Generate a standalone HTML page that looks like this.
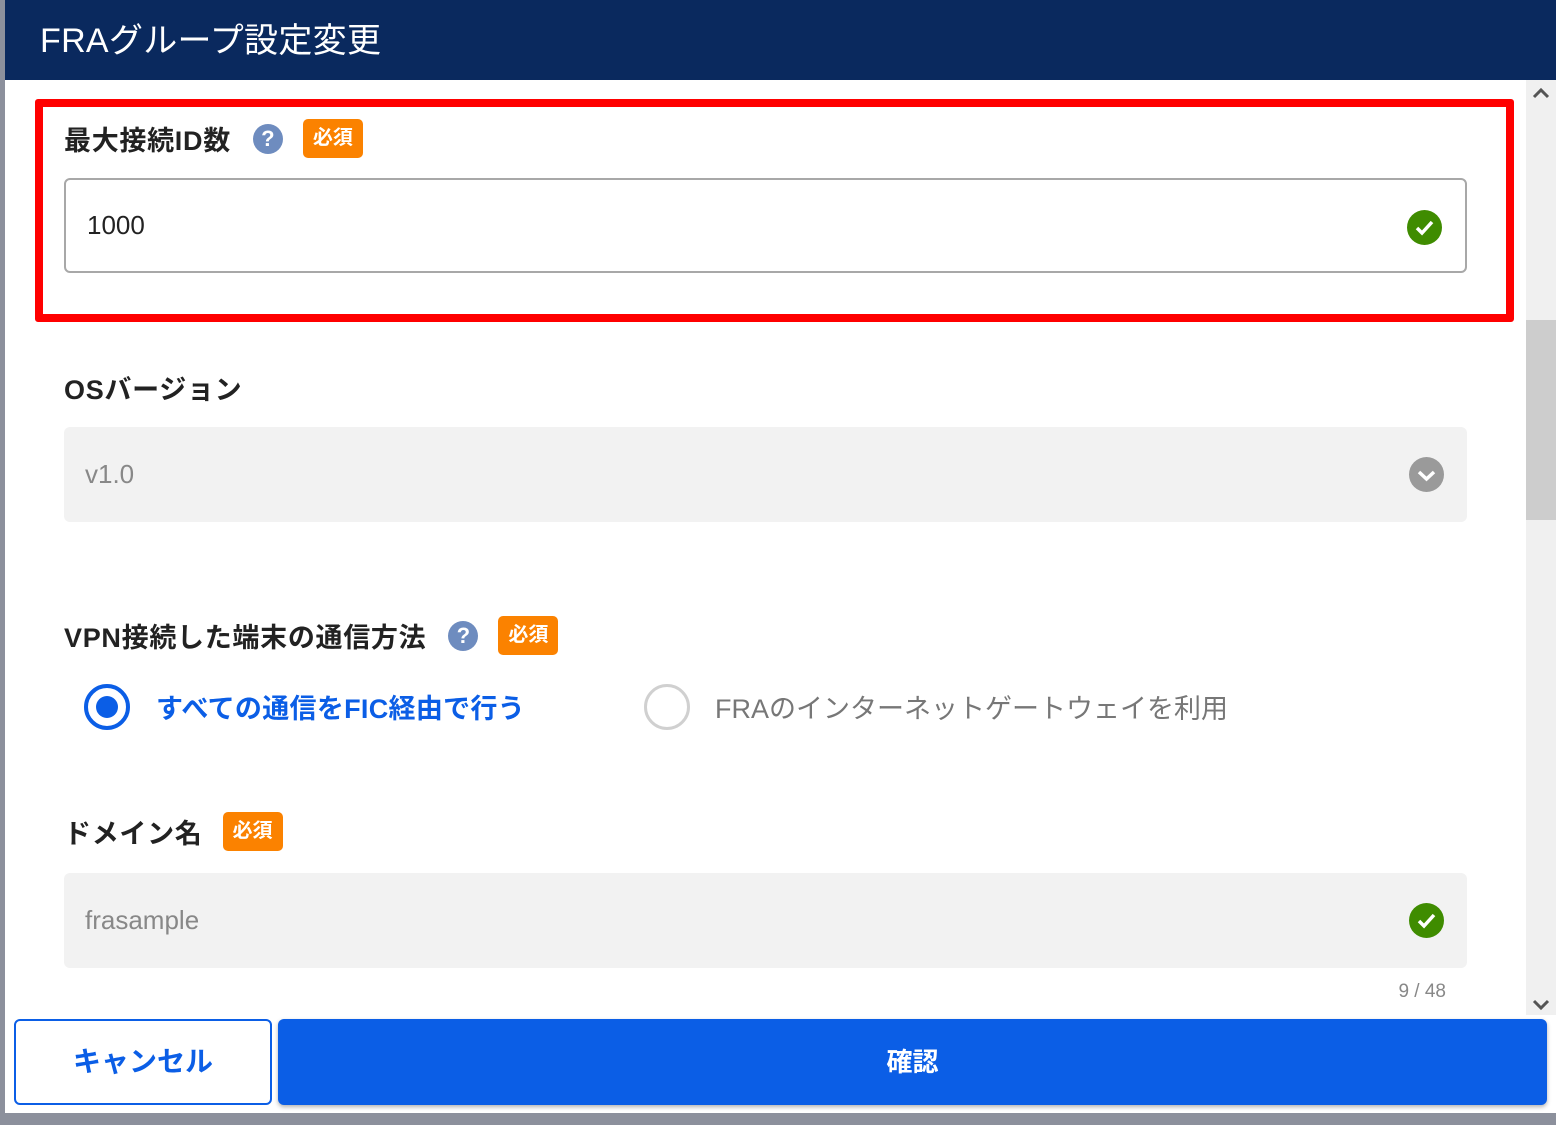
<!DOCTYPE html>
<html><head><meta charset="utf-8"><style>
*{box-sizing:border-box;margin:0;padding:0}
body{width:1556px;height:1125px;background:#8c909c;position:relative;overflow:hidden;font-family:"Liberation Sans","Noto Sans CJK JP",sans-serif}
.modal{position:absolute;left:5px;top:0;width:1551px;height:1113px;background:#fff}
.hdr{position:absolute;left:5px;top:0;width:1551px;height:80px;background:#0a295e;color:#fff;font-size:34px;padding:13px 0 0 35px;letter-spacing:0.3px}
.lbl{position:absolute;font-size:27px;font-weight:bold;color:#222;display:flex;align-items:center;letter-spacing:0.7px}
.q{display:inline-block;width:30px;height:30px;border-radius:50%;background:#6e8cbf;color:#fff;font-size:22px;text-align:center;line-height:30px;font-weight:bold;margin-left:22px;letter-spacing:0}
.req{display:inline-block;background:#fb8200;color:#fff;font-size:20px;font-weight:bold;border-radius:5px;padding:0 10px;height:39px;line-height:39px;margin-left:20px;letter-spacing:0}
.box{position:absolute;left:64px;width:1403px;height:95px;border-radius:6px;font-size:26px;padding-left:21px;display:flex;align-items:center}
.chk{position:absolute;right:23px;top:30px;width:35px;height:35px;border-radius:50%;background:#3f8c00}
</style></head><body>
<div class="modal"></div>
<div class="hdr">FRAグループ設定変更</div>
<div style="position:absolute;left:1526px;top:80px;width:30px;height:935px;background:#f0f0f0"></div>
<div style="position:absolute;left:1526px;top:320px;width:30px;height:200px;background:#cdcdcd"></div>
<svg style="position:absolute;left:1532px;top:86px" width="18" height="14"><path d="M2 11 L9 4 L16 11" stroke="#555" stroke-width="3" fill="none"/></svg>
<svg style="position:absolute;left:1532px;top:998px" width="18" height="14"><path d="M2 3 L9 10 L16 3" stroke="#555" stroke-width="3" fill="none"/></svg>
<div style="position:absolute;left:35px;top:99px;width:1479px;height:223px;border:8px solid #f00;border-radius:3px"></div>
<div class="lbl" style="left:64px;top:119px">最大接続ID数<span class="q">?</span><span class="req">必須</span></div>
<div class="box" style="top:178px;border:2px solid #a8a8a8;color:#222">1000<div class="chk"><svg width="35" height="35"><path d="M10 18 L15 23 L25 12" stroke="#fff" stroke-width="3.5" fill="none"/></svg></div></div>
<div class="lbl" style="left:64px;top:368px">OSバージョン</div>
<div class="box" style="top:427px;background:#f2f2f2;color:#888">v1.0<div class="chk" style="background:#9a9a9a;top:30px"><svg width="35" height="35"><path d="M10 15 L17.5 22 L25 15" stroke="#fff" stroke-width="3.5" fill="none"/></svg></div></div>
<div class="lbl" style="left:64px;top:616px">VPN接続した端末の通信方法<span class="q">?</span><span class="req">必須</span></div>
<div style="position:absolute;left:84px;top:684px;width:46px;height:46px;border-radius:50%;border:4px solid #0b5ee6"><div style="position:absolute;left:8px;top:8px;width:22px;height:22px;border-radius:50%;background:#0b5ee6"></div></div>
<div style="position:absolute;left:156px;top:687px;font-size:27px;font-weight:bold;color:#0b5ee6;letter-spacing:0.3px">すべての通信をFIC経由で行う</div>
<div style="position:absolute;left:644px;top:684px;width:46px;height:46px;border-radius:50%;border:3px solid #d0d0d0"></div>
<div style="position:absolute;left:715px;top:687px;font-size:27px;color:#777">FRAのインターネットゲートウェイを利用</div>
<div class="lbl" style="left:64px;top:812px">ドメイン名<span class="req">必須</span></div>
<div class="box" style="top:873px;background:#f2f2f2;color:#888">frasample<div class="chk"><svg width="35" height="35"><path d="M10 18 L15 23 L25 12" stroke="#fff" stroke-width="3.5" fill="none"/></svg></div></div>
<div style="position:absolute;left:1380px;top:981px;width:66px;text-align:right;font-size:19px;color:#888">9 / 48</div>
<div style="position:absolute;left:14px;top:1019px;width:258px;height:86px;border:2px solid #0b5ee6;border-radius:6px;color:#0b5ee6;font-size:28px;font-weight:bold;text-align:center;line-height:82px;background:#fff">キャンセル</div>
<div style="position:absolute;left:278px;top:1019px;width:1269px;height:86px;background:#0b5ee6;border-radius:6px;color:#fff;font-size:26px;font-weight:bold;text-align:center;line-height:86px;box-shadow:0 2px 4px rgba(0,0,0,.3)">確認</div>
</body></html>
